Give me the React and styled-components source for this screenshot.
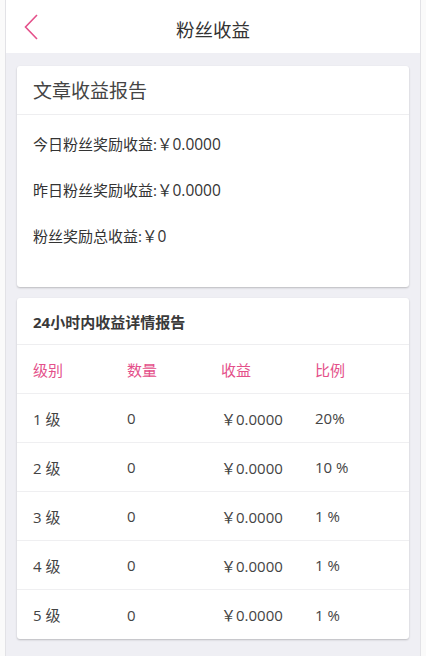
import React from 'react';
import styled, { createGlobalStyle } from 'styled-components';

const pink = '#e4508a';

const GlobalStyle = createGlobalStyle`
  html, body {
    margin: 0;
    padding: 0;
    background: #fafafa;
    font-family: "Open Sans", "Noto Sans CJK SC", sans-serif;
  }
  * { box-sizing: border-box; }
`;

const Page = styled.div`
  margin: 0 5px;
  min-height: 656px;
  background: #efeff4;
  border-left: 1px solid #e2e2e6;
  border-right: 1px solid #e2e2e6;
`;

const Header = styled.div`
  height: 53px;
  background: #fff;
  display: grid;
  grid-template-columns: 1fr auto 1fr;
  align-items: center;
`;

const Back = styled.div`
  padding-left: 17px;
  display: flex;
  align-items: center;
`;

const Title = styled.div`
  font-size: 18.5px;
  color: #333;
  padding-top: 4px;
`;

const Content = styled.div`
  padding: 13px 11px 16px;
  display: flex;
  flex-direction: column;
  gap: 11px;
`;

const Card = styled.div`
  background: #fff;
  border-radius: 3px;
  box-shadow: 0 1px 2px rgba(0, 0, 0, 0.22);
`;

const CardHead = styled.div`
  height: ${p => p.h}px;
  display: flex;
  align-items: center;
  padding-left: 16px;
  border-bottom: 1px solid #eeeef0;
  color: ${p => (p.bold ? '#3a3a3a' : '#444')};
  font-size: ${p => (p.bold ? 15 : 19)}px;
  font-weight: ${p => (p.bold ? 700 : 400)};
`;

const CardBody = styled.div`
  padding: 5px 16px 29px;
`;

const Line = styled.div`
  height: 46px;
  display: flex;
  align-items: center;
  font-size: 15px;
  color: #333;
`;

const Amount = styled.span`
  font-size: 15.5px;
`;

const Row = styled.div`
  height: 49px;
  display: grid;
  grid-template-columns: repeat(4, 94px);
  align-items: center;
  padding: 0 16px;
  font-size: 15px;
  color: ${p => (p.head ? pink : '#444')};
  border-bottom: ${p => (p.last ? 'none' : '1px solid #efeff1')};
`;

const Cell = styled.div``;

const rows = [
  ['1 级', '0', '￥0.0000', '20%'],
  ['2 级', '0', '￥0.0000', '10 %'],
  ['3 级', '0', '￥0.0000', '1 %'],
  ['4 级', '0', '￥0.0000', '1 %'],
  ['5 级', '0', '￥0.0000', '1 %'],
];

export default function App() {
  return (
    <>
      <GlobalStyle />
      <Page>
        <Header>
          <Back>
            <svg width="16" height="26" viewBox="0 0 16 26">
              <polyline points="14,1 2.5,13 14,25" fill="none" stroke={pink} strokeWidth="1.6" />
            </svg>
          </Back>
          <Title>粉丝收益</Title>
          <div />
        </Header>
        <Content>
          <Card>
            <CardHead h={49}>文章收益报告</CardHead>
            <CardBody>
              <Line>今日粉丝奖励收益:<Amount>￥0.0000</Amount></Line>
              <Line>昨日粉丝奖励收益:<Amount>￥0.0000</Amount></Line>
              <Line>粉丝奖励总收益:<Amount>￥0</Amount></Line>
            </CardBody>
          </Card>
          <Card>
            <CardHead h={47} bold>24小时内收益详情报告</CardHead>
            <Row head>
              <Cell>级别</Cell>
              <Cell>数量</Cell>
              <Cell>收益</Cell>
              <Cell>比例</Cell>
            </Row>
            {rows.map((r, i) => (
              <Row key={r[0]} last={i === rows.length - 1}>
                <Cell>{r[0]}</Cell>
                <Cell>{r[1]}</Cell>
                <Cell>{r[2]}</Cell>
                <Cell>{r[3]}</Cell>
              </Row>
            ))}
          </Card>
        </Content>
      </Page>
    </>
  );
}
